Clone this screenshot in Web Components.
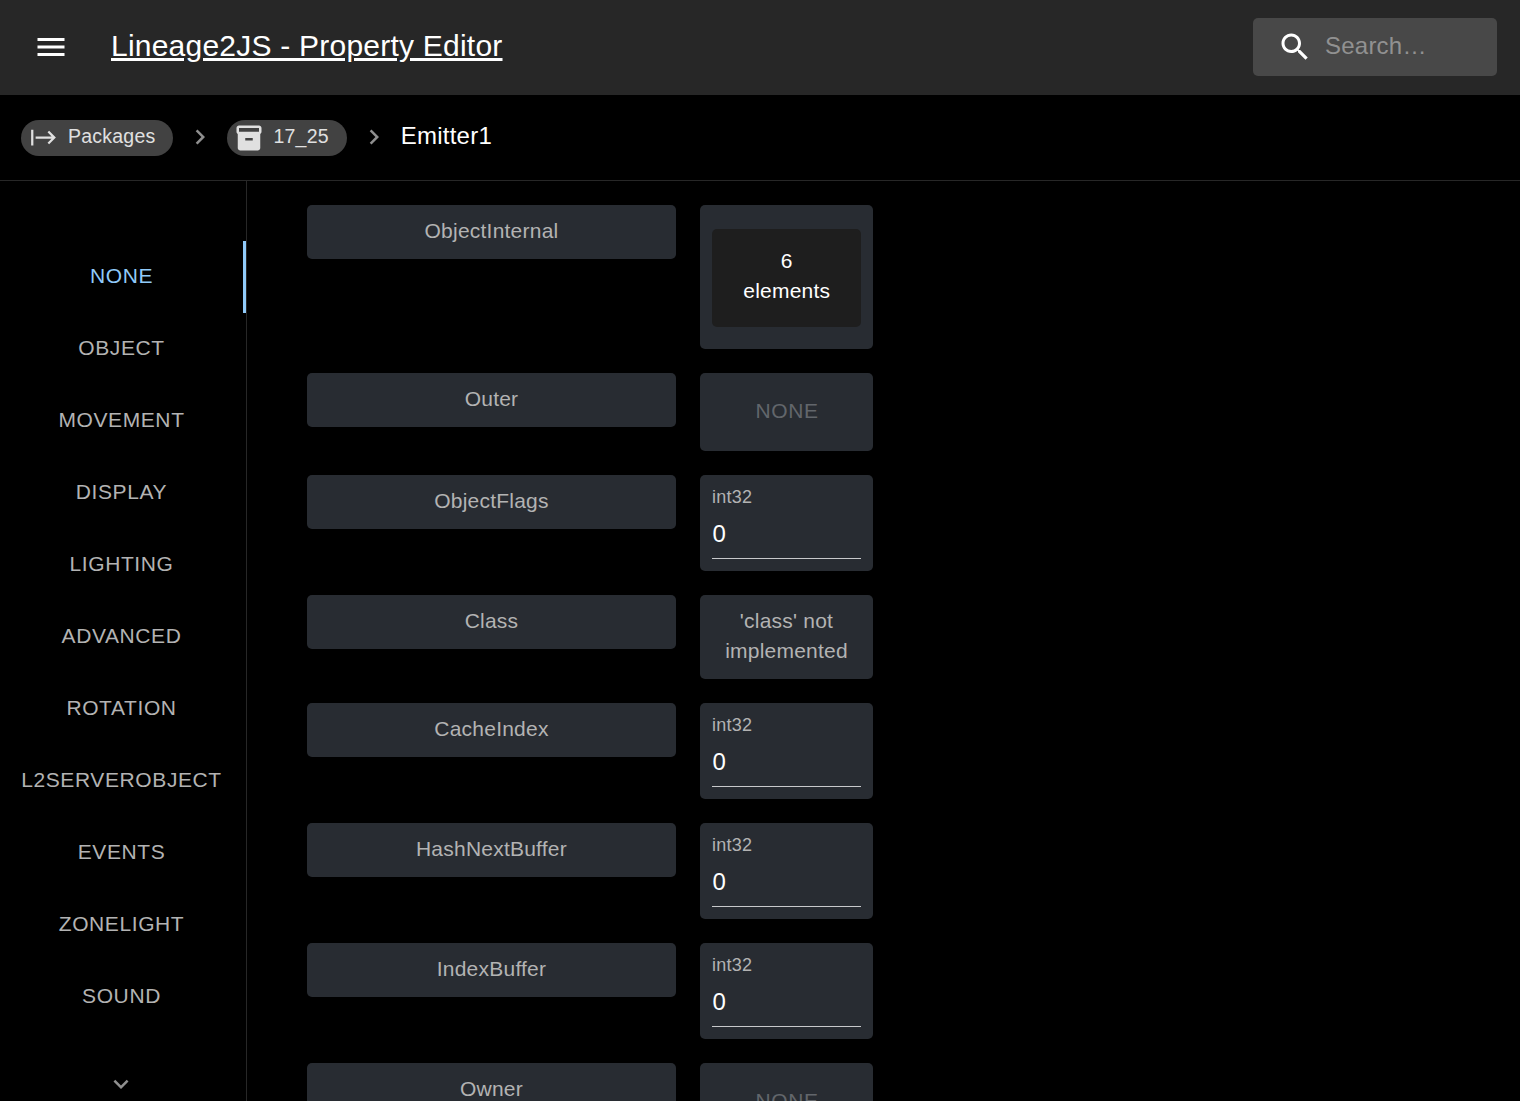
<!DOCTYPE html>
<html lang="en">
<head>
<meta charset="UTF-8">
<title>Lineage2JS - Property Editor</title>
<style>
    html, body { margin: 0; height: 100%; background: #000; overflow: hidden; }
    body {
        display: flex;
        flex-direction: column;
        font-family: "Liberation Sans", Arial, sans-serif;
        font-size: 21px;
        line-height: 30px;
        letter-spacing: 0.225px;
        color: #fff;
    }
</style>
</head>
<body>
    <app-bar>Lineage2JS - Property Editor</app-bar>

    <bread-crumbs>
        <crumb-chip icon="start">Packages</crumb-chip>
        <crumb-chip icon="box">17_25</crumb-chip>
        <span>Emitter1</span>
    </bread-crumbs>

    <editor-main>
        <side-tabs slot="tabs">
            <side-tab active>None</side-tab>
            <side-tab>Object</side-tab>
            <side-tab>Movement</side-tab>
            <side-tab>Display</side-tab>
            <side-tab>Lighting</side-tab>
            <side-tab>Advanced</side-tab>
            <side-tab>Rotation</side-tab>
            <side-tab>L2ServerObject</side-tab>
            <side-tab>Events</side-tab>
            <side-tab>ZoneLight</side-tab>
            <side-tab>Sound</side-tab>
        </side-tabs>

        <prop-row name="ObjectInternal"><array-value>6 elements</array-value></prop-row>
        <prop-row name="Outer"><none-value></none-value></prop-row>
        <prop-row name="ObjectFlags"><int-value></int-value></prop-row>
        <prop-row name="Class"><text-value>'class' not implemented</text-value></prop-row>
        <prop-row name="CacheIndex"><int-value></int-value></prop-row>
        <prop-row name="HashNextBuffer"><int-value></int-value></prop-row>
        <prop-row name="IndexBuffer"><int-value></int-value></prop-row>
        <prop-row name="Owner"><none-value></none-value></prop-row>
    </editor-main>

    <template id="app-bar-template">
        <style>
            :host {
                display: flex;
                align-items: center;
                flex: none;
                height: 95px;
                padding: 0 23px 1px 24px;
                background: #272727;
                box-sizing: border-box;
            }
            svg { display: block; width: 36px; height: 36px; margin: 0 42px 0 9px; fill: #fff; flex: none; }
            a { font-size: 30px; line-height: 1.2; padding-bottom: 2px; letter-spacing: 0.225px; color: #fff; text-decoration: underline; flex: 1; }
            .search {
                display: flex;
                align-items: center;
                width: 244px;
                height: 58px;
                padding-left: 24px;
                box-sizing: border-box;
                border-radius: 5px;
                background: #484848;
                color: #919191;
                font-size: 24px;
                letter-spacing: 0.225px;
            }
            .search span { padding-bottom: 2px; }
            .search svg { width: 36px; height: 36px; margin: 0 12px 0 0; }
        </style>
        <svg viewBox="0 0 24 24"><path d="M3 18h18v-2H3v2zm0-5h18v-2H3v2zm0-7v2h18V6H3z"/></svg>
        <a><slot></slot></a>
        <div class="search">
            <svg viewBox="0 0 24 24"><path d="M15.5 14h-.79l-.28-.27C15.41 12.59 16 11.11 16 9.5 16 5.91 13.09 3 9.5 3S3 5.91 3 9.5 5.91 16 9.5 16c1.61 0 3.09-.59 4.23-1.57l.27.28v.79l5 4.99L20.49 19l-4.99-5zm-6 0C7.01 14 5 11.99 5 9.5S7.01 5 9.5 5 14 7.01 14 9.5 11.99 14 9.5 14z"/></svg>
            <span>Search…</span>
        </div>
    </template>

    <template id="bread-crumbs-template">
        <style>
            :host {
                display: flex;
                align-items: center;
                flex: none;
                height: 86px;
                padding: 1px 21px 0;
                box-sizing: border-box;
                border-bottom: 1px solid #272727;
            }
            ::slotted(span) { font-size: 24px; padding-bottom: 4px; letter-spacing: 0.225px; color: #fff; }
            .sep { display: block; width: 30px; height: 30px; margin: -2px 12px 0; fill: #8f8f8f; }
        </style>
        <slot></slot>
    </template>

    <template id="crumb-chip-template">
        <style>
            :host {
                display: inline-flex;
                align-items: center;
                height: 36px;
                padding-right: 18px;
                border-radius: 18px;
                background: #424242;
                color: #e0e0e0;
                font-size: 19.5px;
            }
            svg { display: block; fill: #e0e0e0; flex: none; }
            span { padding-bottom: 4px; }
            :host([icon="start"]) svg { width: 27px; height: 27px; margin: 0 11px 2px 9px; }
            :host([icon="box"]) svg { width: 30px; height: 30px; margin: 0 9px 0 7px; }
        </style>
        <svg viewBox="0 0 24 24"><path></path></svg>
        <span><slot></slot></span>
    </template>

    <template id="editor-main-template">
        <style>
            :host { display: flex; flex: 1; min-height: 0; }
            .tabs { flex: none; width: 246px; border-right: 1px solid #272727; }
            .rows {
                flex: 1;
                min-width: 0;
                display: flex;
                flex-direction: column;
                gap: 24px;
                padding: 24px 60px;
            }
        </style>
        <div class="tabs"><slot name="tabs"></slot></div>
        <div class="rows"><slot></slot></div>
    </template>

    <template id="side-tabs-template">
        <style>
            :host { display: flex; flex-direction: column; height: 100%; padding-top: 60px; box-sizing: border-box; overflow: hidden; }
            svg { display: block; flex: none; width: 30px; height: 30px; margin: 36px auto 0 106px; fill: #8f8f8f; }
        </style>
        <slot></slot>
        <svg viewBox="0 0 24 24"><path d="M7.41 8.59 12 13.17l4.59-4.58L18 10l-6 6-6-6 1.41-1.41z"/></svg>
    </template>

    <template id="side-tab-template">
        <style>
            :host {
                display: flex;
                align-items: center;
                justify-content: center;
                flex: none;
                height: 72px;
                padding-bottom: 2px;
                box-sizing: border-box;
                border-right: 3px solid transparent;
                font-size: 21px;
                letter-spacing: 0.6px;
                text-transform: uppercase;
                color: #b3b3b3;
            }
            :host([active]) { color: #90caf9; border-right-color: #90caf9; }
        </style>
        <slot></slot>
    </template>

    <template id="prop-row-template">
        <style>
            :host { display: flex; align-items: flex-start; gap: 24px; flex: none; }
            .name {
                width: 369px;
                flex: none;
                padding: 11px 12px 13px;
                box-sizing: border-box;
                border-radius: 5px;
                background: #282c32;
                color: #b3b3b3;
                text-align: center;
            }
            .value { width: 173px; flex: none; }
        </style>
        <div class="name"></div>
        <div class="value"><slot></slot></div>
    </template>

    <template id="card-template">
        <style>
            :host { display: block; padding: 24px 12px 22px; border-radius: 5px; background: #282c32; box-sizing: border-box; }
            .inner {
                padding: 17px 24px 21px 24.5px;
                border-radius: 5px;
                background: #1e1e1e;
                text-align: center;
            }
        </style>
        <div class="inner"><slot></slot></div>
    </template>

    <template id="none-template">
        <style>
            :host { display: block; padding: 23px 12px 25px 13px; border-radius: 5px; background: #282c32; text-align: center; color: #62666b; letter-spacing: .6px; }
        </style>
        NONE
    </template>

    <template id="text-template">
        <style>
            :host { display: block; padding: 11px 12px 13px; border-radius: 5px; background: #282c32; text-align: center; color: #b3b3b3; }
        </style>
        <slot></slot>
    </template>

    <template id="int-template">
        <style>
            :host { display: block; height: 96px; padding: 10px 12px 12px; box-sizing: border-box; border-radius: 5px; background: #282c32; }
            label { display: block; font-size: 18px; line-height: 24px; color: #b3b3b3; }
            .input { margin-top: 7px; height: 42px; padding-left: .5px; font-size: 24px; line-height: 36px; border-bottom: 1px solid #c8c9cb; }
        </style>
        <label>int32</label>
        <div class="input">0</div>
    </template>

    <script>
        // Every element just clones its template into an open shadow root
        const fromTemplate = (tag, id) => customElements.define(tag, class extends HTMLElement {
            constructor() {
                super();
                this.attachShadow({ mode: "open" }).appendChild(
                    document.getElementById(id).content.cloneNode(true)
                );
            }
        });

        const ICONS = {
            start: "M1 5h2v14H1zM5 11h14.17l-3.58-3.59L17 6l6 6-6 6-1.41-1.41L19.17 13H5z",
            box: "M20 2H4c-1 0-2 .9-2 2v3.01c0 .72.43 1.34 1 1.69V20c0 1.1 1.1 2 2 2h14c.9 0 2-.9 2-2V8.7c.57-.35 1-.97 1-1.69V4c0-1.1-1-2-2-2zm-5 12H9v-2h6v2zm5-7H4V4l16-.02V7z"
        };

        fromTemplate("app-bar", "app-bar-template");
        fromTemplate("editor-main", "editor-main-template");
        fromTemplate("side-tabs", "side-tabs-template");
        fromTemplate("side-tab", "side-tab-template");
        fromTemplate("array-value", "card-template");
        fromTemplate("none-value", "none-template");
        fromTemplate("text-value", "text-template");
        fromTemplate("int-value", "int-template");

        customElements.define("bread-crumbs", class extends HTMLElement {
            constructor() {
                super();
                this.attachShadow({ mode: "open" }).appendChild(
                    document.getElementById("bread-crumbs-template").content.cloneNode(true)
                );
            }
            connectedCallback() {
                // separators go between the crumbs, so each crumb gets a named slot
                const root = this.shadowRoot;
                const items = [...this.children];
                root.querySelector("slot").remove();
                items.forEach((item, i) => {
                    const s = document.createElement("slot");
                    s.name = "c" + i;
                    item.slot = "c" + i;
                    root.appendChild(s);
                    if (i < items.length - 1) {
                        root.appendChild(document.createRange().createContextualFragment(
                            '<svg class="sep" viewBox="0 0 24 24" xmlns="http://www.w3.org/2000/svg"><path d="M10 6 8.59 7.41 13.17 12l-4.58 4.59L10 18l6-6z"/></svg>'
                        ));
                    }
                });
            }
        });

        customElements.define("crumb-chip", class extends HTMLElement {
            constructor() {
                super();
                this.attachShadow({ mode: "open" }).appendChild(
                    document.getElementById("crumb-chip-template").content.cloneNode(true)
                );
            }
            connectedCallback() {
                this.shadowRoot.querySelector("path").setAttribute("d", ICONS[this.getAttribute("icon")]);
            }
        });

        customElements.define("prop-row", class extends HTMLElement {
            constructor() {
                super();
                this.attachShadow({ mode: "open" }).appendChild(
                    document.getElementById("prop-row-template").content.cloneNode(true)
                );
            }
            connectedCallback() {
                this.shadowRoot.querySelector(".name").textContent = this.getAttribute("name");
            }
        });
    </script>
</body>
</html>
